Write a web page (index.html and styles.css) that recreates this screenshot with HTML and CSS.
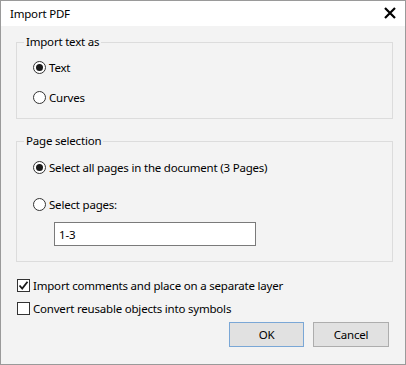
FILE: index.html
```html
<!DOCTYPE html>
<html lang="en">
<head>
  <meta charset="UTF-8">
  <title>Import PDF</title>
  <link rel="stylesheet" href="styles.css">
</head>
<body>
  <div class="dialog">
    <div class="titlebar">
      <span class="title">Import PDF</span>
      <svg class="close" width="12" height="12" viewBox="0 0 12 12">
        <path d="M1 1 L11 11 M11 1 L1 11" stroke="#000" stroke-width="2.2" fill="none"/>
      </svg>
    </div>
    <div class="content">
      <fieldset class="group group-text">
        <legend>Import text as</legend>
        <label class="option"><span class="radio checked"></span>Text</label>
        <label class="option"><span class="radio"></span>Curves</label>
      </fieldset>
      <fieldset class="group group-pages">
        <legend>Page selection</legend>
        <label class="option"><span class="radio checked"></span>Select all pages in the document (3 Pages)</label>
        <label class="option"><span class="radio"></span>Select pages:</label>
        <input class="pages-input" type="text" value="1-3">
      </fieldset>
      <label class="check check-first">
        <span class="box">
          <svg width="11" height="11" viewBox="0 0 11 11"><polyline points="1.5,5.5 4.2,8.5 9.5,1.8" stroke="#1a1a1a" stroke-width="1.8" fill="none"/></svg>
        </span>
        Import comments and place on a separate layer
      </label>
      <label class="check"><span class="box"></span>Convert reusable objects into symbols</label>
      <div class="buttons">
        <button class="btn btn-default">OK</button>
        <button class="btn">Cancel</button>
      </div>
    </div>
  </div>
</body>
</html>
```

FILE: styles.css
```css
:root {
  --dialog-bg: #f3f3f3;
  --text-color: #000;
  --group-border: #dcdcdc;
  --frame-border: #9a9a9a;
  --ui-font: "Noto Sans", "Open Sans", sans-serif;
}

* {
  box-sizing: border-box;
}

body {
  margin: 0;
  font-family: var(--ui-font);
  font-size: 11.5px;
  letter-spacing: -0.2px;
  color: var(--text-color);
}

.dialog {
  width: 406px;
  height: 365px;
  border: 1px solid var(--frame-border);
  background: var(--dialog-bg);
  display: flex;
  flex-direction: column;
}

.titlebar {
  height: 25px;
  background: #fff;
  display: flex;
  align-items: center;
  justify-content: space-between;
  padding: 0 9px 0 9px;
}

.title {
  line-height: 16px;
}

.close {
  margin-top: -2px;
}

.content {
  padding: 8px 12px 0 15px;
  display: flex;
  flex-direction: column;
}

.group {
  margin: 0;
  border: 1px solid var(--group-border);
  padding: 7px 0 11px 16px;
  display: flex;
  flex-direction: column;
  align-items: flex-start;
}

.group legend {
  padding: 0 2px;
  margin-left: -9px;
  line-height: 16px;
}

.group-text .option + .option {
  margin-top: 10px;
}

.group-pages {
  margin-top: 14px;
  padding-top: 8px;
  padding-bottom: 15px;
}

.group-pages .option + .option {
  margin-top: 17px;
}

.option {
  display: flex;
  align-items: center;
  height: 20px;
  gap: 3px;
  white-space: nowrap;
}

.radio {
  width: 13px;
  height: 13px;
  border: 1px solid #333;
  border-radius: 50%;
  background: #fff;
  display: flex;
  align-items: center;
  justify-content: center;
}

.radio.checked::after {
  content: "";
  width: 7px;
  height: 7px;
  border-radius: 50%;
  background: #1a1a1a;
}

.pages-input {
  margin: 8px 0 0 21px;
  width: 202px;
  height: 24px;
  border: 1px solid #7a7a7a;
  background: #fff;
  padding: 0 4px;
  font-family: var(--ui-font);
  font-size: 11.5px;
  letter-spacing: -0.2px;
  color: var(--text-color);
  outline: none;
}

.check {
  display: flex;
  align-items: center;
  height: 20px;
  gap: 3px;
  margin-top: 3px;
  margin-left: 1px;
  white-space: nowrap;
}

.check-first {
  margin-top: 13px;
}

.box {
  width: 13px;
  height: 13px;
  border: 1px solid #333;
  background: #fff;
  display: flex;
  align-items: center;
  justify-content: center;
}

.buttons {
  display: flex;
  justify-content: flex-end;
  gap: 9px;
  margin-top: 4px;
  padding-right: 4px;
}

.btn {
  width: 75px;
  height: 25px;
  background: #e1e1e1;
  border: 1px solid #adadad;
  font-family: var(--ui-font);
  font-size: 11.5px;
  letter-spacing: -0.2px;
  color: var(--text-color);
  padding: 0;
}

.btn + .btn {
  width: 76px;
}

.btn-default {
  border-color: #7aa7d6;
}
```
